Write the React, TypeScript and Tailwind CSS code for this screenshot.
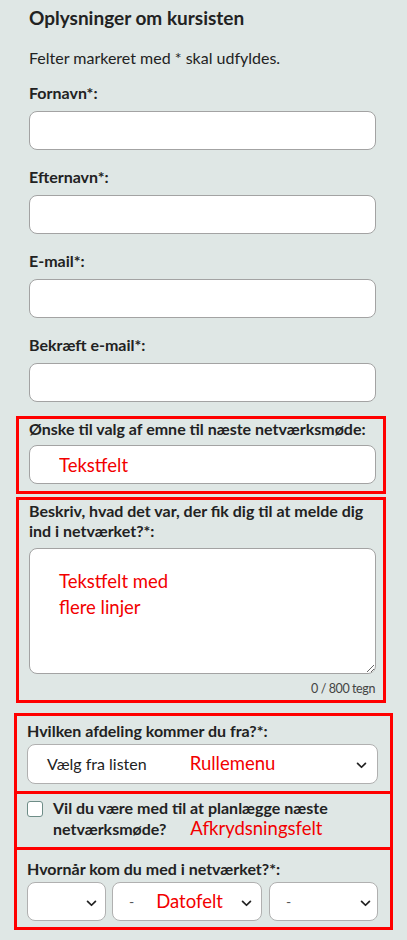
import React from "react";

const Chevron = ({ className = "" }: { className?: string }) => (
  <svg viewBox="0 0 12 8" width="11" height="7" className={className} fill="none">
    <path d="M1.5 1.5 L6 6 L10.5 1.5" stroke="#222" strokeWidth="2" strokeLinecap="round" strokeLinejoin="round" />
  </svg>
);

const Label = ({ children, className = "" }: { children: React.ReactNode; className?: string }) => (
  <div className={"text-[16px] font-bold leading-[20px] text-[#222] " + className}>{children}</div>
);

const TextInput = ({ value }: { value?: string }) => (
  <input
    readOnly
    defaultValue={value}
    className="block h-[39px] w-[347px] rounded-[8px] border border-[#a3a3a3] bg-white pl-[29px] text-[18.5px] text-[#f20000] outline-none"
    style={{ fontFamily: "Lato, 'Liberation Sans', sans-serif" }}
  />
);

export default function App() {
  return (
    <div
      className="min-h-[940px] w-full bg-[#dfe7e5] text-[#222]"
      style={{ fontFamily: "Lato, 'Liberation Sans', sans-serif" }}
    >
      <div className="pl-[29px] pt-[6px]">
        <h1 className="text-[19px] font-bold leading-[24px]">Oplysninger om kursisten</h1>
        <p className="mt-[18px] text-[16px] leading-[20px]">Felter markeret med * skal udfyldes.</p>

        <Label className="mt-[15px]">Fornavn*:</Label>
        <div className="mt-[8px]"><TextInput /></div>

        <Label className="mt-[17px]">Efternavn*:</Label>
        <div className="mt-[8px]"><TextInput /></div>

        <Label className="mt-[17px]">E-mail*:</Label>
        <div className="mt-[8px]"><TextInput /></div>

        <Label className="mt-[17px]">Bekræft e-mail*:</Label>
        <div className="mt-[8px]"><TextInput /></div>
      </div>

      {/* Box 1 */}
      <div className="ml-[16px] mt-[14px] w-[370px] border-[3px] border-[#ff0000] pb-[7px] pl-[10px] pt-[0px]">
        <Label>Ønske til valg af emne til næste netværksmøde:</Label>
        <div className="mt-[6px]"><TextInput value="Tekstfelt" /></div>
      </div>

      {/* Box 2 */}
      <div className="ml-[16px] mt-[3px] w-[370px] border-[3px] border-[#ff0000] pb-[3px] pl-[10px] pr-[8px] pt-[1px]">
        <Label>Beskriv, hvad det var, der fik dig til at melde dig ind i netværket?*:</Label>
        <textarea
          readOnly
          defaultValue={"Tekstfelt med\nflere linjer"}
          className="mt-[7px] block h-[126px] w-[347px] resize-y rounded-[8px] border border-[#a3a3a3] bg-white pl-[29px] pt-[19px] text-[18.5px] leading-[26px] text-[#f20000] outline-none"
          style={{ fontFamily: "Lato, 'Liberation Sans', sans-serif" }}
        />
        <div className="mt-[7px] text-right text-[12.5px] leading-[16px] tracking-[-0.4px] text-[#444]">0 / 800 tegn</div>
      </div>

      {/* Box 3 */}
      <div className="ml-[14px] mt-[10px] w-[379px] border-[3px] border-[#ff0000] pb-[7px] pl-[10px] pt-[5px]">
        <Label>Hvilken afdeling kommer du fra?*:</Label>
        <div className="relative mt-[3px] flex h-[40px] w-[351px] items-center rounded-[8px] border border-[#b0b0b0] bg-white pl-[19px]">
          <span className="text-[16px] text-[#222]">Vælg fra listen</span>
          <span className="ml-[43px] text-[18.5px] text-[#f20000]">Rullemenu</span>
          <Chevron className="absolute right-[10px] top-[17px]" />
        </div>
      </div>

      {/* Box 4 */}
      <div className="ml-[14px] w-[379px] border-x-[3px] border-b-[3px] border-[#ff0000] pb-[8px] pl-[10px] pt-[4px]">
        <div className="flex">
          <div className="mt-[3px] h-[16px] w-[16px] shrink-0 rounded-[3px] border-[1.5px] border-[#6e8d87] bg-white" />
          <div className="ml-[10px] text-[16px] font-bold leading-[20px] text-[#222]">
            Vil du være med til at planlægge næste
            <br />
            netværksmøde?
            <span className="ml-[24px] text-[18.5px] font-normal text-[#f20000]">Afkrydsningsfelt</span>
          </div>
        </div>
      </div>

      {/* Box 5 */}
      <div className="ml-[14px] w-[379px] border-x-[3px] border-b-[3px] border-[#ff0000] pb-[6px] pl-[10px] pt-[9px]">
        <Label>Hvornår kom du med i netværket?*:</Label>
        <div className="mt-[3px] flex">
          <div className="relative h-[39px] w-[79px] rounded-[8px] border border-[#b0b0b0] bg-white">
            <Chevron className="absolute right-[8px] top-[17px]" />
          </div>
          <div className="relative ml-[6px] flex h-[39px] w-[150px] items-center rounded-[8px] border border-[#b0b0b0] bg-white pl-[16px]">
            <span className="text-[14px] text-[#555]">-</span>
            <span className="ml-[22px] text-[18.5px] text-[#f20000]">Datofelt</span>
            <Chevron className="absolute right-[9px] top-[17px]" />
          </div>
          <div className="relative ml-[7px] flex h-[39px] w-[109px] items-center rounded-[8px] border border-[#b0b0b0] bg-white pl-[16px]">
            <span className="text-[14px] text-[#555]">-</span>
            <Chevron className="absolute right-[6px] top-[17px]" />
          </div>
        </div>
      </div>
    </div>
  );
}
